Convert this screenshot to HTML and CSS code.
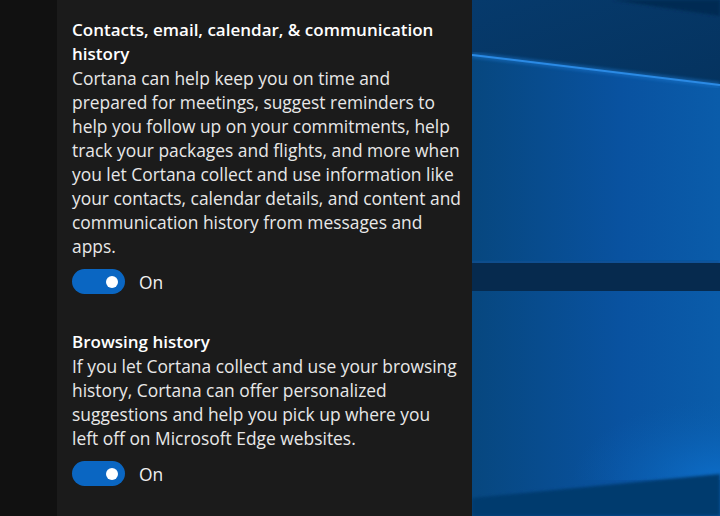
FILE: index.html
```html
<!DOCTYPE html>
<html lang="en">

<head>
  <meta charset="UTF-8">
  <meta name="viewport" content="width=device-width, initial-scale=1.0">
  <title>Cortana Permissions</title>
  <link rel="stylesheet" href="styles.css">
</head>

<body>
  <div class="rail"></div>

  <div class="panel">
    <section class="setting">
      <h2>Contacts, email, calendar, &amp; communication history</h2>
      <p>Cortana can help keep you on time and prepared for meetings, suggest reminders to help you follow up on your commitments, help track your packages and flights, and more when you let Cortana collect and use information like your contacts, calendar details, and content and communication history from messages and apps.</p>
      <label class="toggle">
        <span class="switch on"><span class="knob"></span></span>
        <span class="state">On</span>
      </label>
    </section>

    <section class="setting">
      <h2>Browsing history</h2>
      <p>If you let Cortana collect and use your browsing history, Cortana can offer personalized suggestions and help you pick up where you left&nbsp;off on Microsoft Edge websites.</p>
      <label class="toggle">
        <span class="switch on"><span class="knob"></span></span>
        <span class="state">On</span>
      </label>
    </section>
  </div>

  <div class="wallpaper">
    <svg viewBox="0 0 248 516" preserveAspectRatio="none" width="248" height="516">
      <defs>
        <linearGradient id="pane" x1="0" y1="0" x2="1" y2="0">
          <stop offset="0" stop-color="#07477f" />
          <stop offset="0.6" stop-color="#0952a0" />
          <stop offset="1" stop-color="#0a5caa" />
        </linearGradient>
        <linearGradient id="sky" x1="0" y1="0" x2="1" y2="1">
          <stop offset="0" stop-color="#063a6c" />
          <stop offset="1" stop-color="#05335f" />
        </linearGradient>
        <radialGradient id="glow" cx="1" cy="1" r="1">
          <stop offset="0" stop-color="#0d6fcc" stop-opacity="0.9" />
          <stop offset="1" stop-color="#0b5fb0" stop-opacity="0" />
        </radialGradient>
        <filter id="soft">
          <feGaussianBlur stdDeviation="1.6" />
        </filter>
      </defs>

      <rect width="248" height="516" fill="url(#pane)" />
      <polygon points="0,0 248,0 248,85 0,54" fill="url(#sky)" />
      <polygon points="140,0 248,0 248,16" fill="#032a52" filter="url(#soft)" />

      <!-- light beam across the upper pane -->
      <line x1="0" y1="55" x2="248" y2="85" stroke="#1f7ad2" stroke-width="6" opacity="0.45" filter="url(#soft)" />
      <line x1="0" y1="55" x2="248" y2="85" stroke="#2b8ae4" stroke-width="2" />

      <!-- window frame bar -->
      <rect x="0" y="261" width="248" height="3" fill="#0b4f92" filter="url(#soft)" />
      <rect x="0" y="263" width="248" height="28" fill="#062a4e" />

      <!-- lower pane edge -->
      <rect x="100" y="400" width="148" height="80" fill="url(#glow)" />
      <polygon points="0,498 248,474 248,516 0,516" fill="#063a6e" filter="url(#soft)" />
    </svg>
  </div>
</body>

</html>
```

FILE: styles.css
```css
body {
  margin: 0;
  height: 516px;
  display: flex;
  overflow: hidden;
  background-color: #1b1b1b;
  font-family: 'Open Sans', sans-serif;
  color: #e8e8e8;
}

.rail {
  width: 57px;
  background-color: #111111;
}

.panel {
  width: 390px;
  padding: 18px 10px 0 15px;
  background-color: #1b1b1b;
}

.setting {
  margin-bottom: 36px;
}

.setting h2 {
  margin: 0;
  font-size: 17px;
  font-weight: 600;
  line-height: 24px;
  color: #ffffff;
}

.setting p {
  margin: 0;
  font-size: 17.4px;
  line-height: 24px;
}

.toggle {
  display: flex;
  align-items: center;
  gap: 14px;
  margin-top: 11px;
}

.switch {
  width: 53px;
  height: 25px;
  border-radius: 13px;
  background-color: #0a66c2;
  display: flex;
  align-items: center;
  justify-content: flex-end;
  padding-right: 7px;
  box-sizing: border-box;
}

.knob {
  width: 12px;
  height: 12px;
  border-radius: 50%;
  background-color: #ffffff;
}

.state {
  font-size: 17.4px;
  color: #f0f0f0;
}

.wallpaper {
  flex: 1;
  overflow: hidden;
}

.wallpaper svg {
  display: block;
}
```
